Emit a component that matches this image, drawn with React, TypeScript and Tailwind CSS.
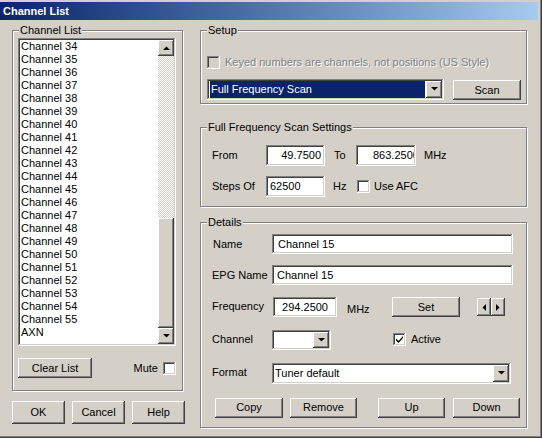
import React from "react";

// Win2000 classic bevels
const RAISED =
  "bg-[#d4d0c8] shadow-[inset_-1px_-1px_#404040,inset_1px_1px_#ffffff,inset_-2px_-2px_#808080,inset_2px_2px_#d4d0c8]";
const SUNKEN =
  "shadow-[inset_-1px_-1px_#ffffff,inset_1px_1px_#808080,inset_-2px_-2px_#d4d0c8,inset_2px_2px_#404040]";

function Arrow({ dir }: { dir: "up" | "down" | "left" | "right" }) {
  const pts: Record<string, string> = {
    up: "0,4 7,4 3.5,0.5",
    down: "0,0 7,0 3.5,3.5",
    left: "4,0 4,7 0.5,3.5",
    right: "0,0 0,7 3.5,3.5",
  };
  const vertical = dir === "up" || dir === "down";
  return (
    <svg width={vertical ? 7 : 4} height={vertical ? 4 : 7} viewBox={vertical ? "0 0 7 4" : "0 0 4 7"}>
      <polygon points={pts[dir]} fill="#000" />
    </svg>
  );
}

function Btn({ children, className = "" }: { children?: React.ReactNode; className?: string }) {
  return (
    <div className={`${RAISED} flex items-center justify-center text-[11px] text-black ${className}`}>
      {children}
    </div>
  );
}

function Check({ checked = false, disabled = false }: { checked?: boolean; disabled?: boolean }) {
  return (
    <div
      className={`${SUNKEN} w-[13px] h-[13px] shrink-0 flex items-center justify-center ${
        disabled ? "bg-[#d4d0c8]" : "bg-white"
      }`}
    >
      {checked && (
        <svg width="7" height="7" viewBox="0 0 7 7">
          <path d="M0 2.5 L0 4.5 L2.5 7 L7 2 L7 0 L2.5 5 Z" fill="#000" />
        </svg>
      )}
    </div>
  );
}

function GroupBox({
  label,
  className = "",
  children,
}: {
  label: string;
  className?: string;
  children?: React.ReactNode;
}) {
  return (
    <div
      className={`relative border border-[#808080] shadow-[inset_1px_1px_#ffffff,1px_1px_#ffffff] ${className}`}
    >
      <span className="absolute -top-[8px] left-[6px] px-[1px] bg-[#d4d0c8] text-[11px] leading-[14px]">
        {label}
      </span>
      {children}
    </div>
  );
}

// className = outer size, inner = text padding (clipped inside the bevel)
function TextBox({
  value,
  className = "",
  inner = "",
  right = false,
}: {
  value: string;
  className?: string;
  inner?: string;
  right?: boolean;
}) {
  return (
    <div className={`${SUNKEN} bg-white p-[2px] flex text-[11px] ${className}`}>
      <div
        className={`flex-1 min-w-0 flex items-center overflow-hidden whitespace-nowrap ${
          right ? "justify-end" : ""
        } ${inner}`}
      >
        <span className="shrink-0">{value}</span>
      </div>
    </div>
  );
}

function Combo({ children, className = "" }: { children?: React.ReactNode; className?: string }) {
  return (
    <div className={`${SUNKEN} bg-white flex items-stretch p-[2px] text-[11px] ${className}`}>
      <div className="flex-1 flex items-center overflow-hidden whitespace-nowrap min-w-0">{children}</div>
      <div className={`${RAISED} w-[16px] flex items-center justify-center`}>
        <Arrow dir="down" />
      </div>
    </div>
  );
}

export default function App() {
  const channels = Array.from({ length: 22 }, (_, i) => `Channel ${34 + i}`).concat("AXN");

  return (
    <div className="w-[542px] h-[438px] bg-[#d4d0c8] flex flex-col pt-[2px] pr-[4px] text-black font-['Liberation_Sans',Arial,sans-serif] shadow-[inset_-1px_-1px_#404040,inset_-2px_-2px_#808080] overflow-hidden select-none">
      {/* Title bar */}
      <div className="h-[18px] shrink-0 flex items-center pl-[3px] bg-linear-to-r from-[#0a246a] to-[#a6caf0] text-white font-bold text-[11px]">
        Channel List
      </div>

      <div className="flex">
        {/* Left column */}
        <div className="ml-[12px] mt-[10px] w-[173px] flex flex-col">
          <GroupBox label="Channel List" className="w-[171px] h-[361px] pl-[5px] pt-[7px]">
            {/* List box */}
            <div className={`${SUNKEN} bg-white w-[158px] h-[308px] p-[2px] flex`}>
              <div className="flex-1 pl-[1px] overflow-hidden">
                {channels.map((c) => (
                  <div key={c} className="text-[11px] leading-[13px] h-[13px] whitespace-nowrap">
                    {c}
                  </div>
                ))}
              </div>
              <div className="w-[16px] flex flex-col">
                <Btn className="h-[16px] shrink-0">
                  <Arrow dir="up" />
                </Btn>
                <div className="flex-1 bg-[repeating-conic-gradient(#d4d0c8_0_25%,#ffffff_0_50%)] bg-[length:2px_2px]" />
                <Btn className="h-[110px] shrink-0" />
                <Btn className="h-[16px] shrink-0">
                  <Arrow dir="down" />
                </Btn>
              </div>
            </div>

            <div className="w-[158px] mt-[12px] flex items-center">
              <Btn className="w-[74px] h-[20px]">Clear List</Btn>
              <span className="ml-auto mr-[5px] text-[11px]">Mute</span>
              <Check />
            </div>
          </GroupBox>

          <div className="mt-[10px] flex gap-[7px]">
            <Btn className="w-[53px] h-[23px]">OK</Btn>
            <Btn className="w-[53px] h-[23px]">Cancel</Btn>
            <Btn className="w-[53px] h-[23px]">Help</Btn>
          </div>
        </div>

        {/* Right column */}
        <div className="ml-[15px] mt-[10px] w-[327px] flex flex-col">
          <GroupBox label="Setup" className="h-[74px] pl-[6px]">
            <div className="mt-[25px] flex items-center h-[13px]">
              <Check disabled />
              <span className="ml-[5px] text-[11px] text-[#808080] [text-shadow:1px_1px_0_#ffffff]">
                Keyed numbers are channels, not positions (US Style)
              </span>
            </div>
            <div className="mt-[9px] flex items-center">
              <Combo className="w-[237px] h-[21px]">
                <div className="h-full w-full mx-[1px] my-[1px] bg-[#0a246a] text-white flex items-center pl-[1px]">
                  Full Frequency Scan
                </div>
              </Combo>
              <Btn className="ml-[9px] mt-[2px] w-[68px] h-[20px]">Scan</Btn>
            </div>
          </GroupBox>

          <GroupBox label="Full Frequency Scan Settings" className="mt-[23px] h-[80px] pl-[11px]">
            <div className="mt-[17px] flex items-center text-[11px]">
              <span className="w-[54px]">From</span>
              <TextBox value="49.7500" right className="w-[59px] h-[21px]" inner="pr-[2px]" />
              <span className="ml-[9px] w-[22px]">To</span>
              <TextBox value="863.2500" className="w-[60px] h-[21px]" inner="pl-[15px]" />
              <span className="ml-[8px]">MHz</span>
            </div>
            <div className="mt-[10px] flex items-center text-[11px]">
              <span className="w-[54px]">Steps Of</span>
              <TextBox value="62500" className="w-[59px] h-[21px]" inner="pl-[2px]" />
              <span className="ml-[8px] w-[24px]">Hz</span>
              <Check />
              <span className="ml-[4px]">Use AFC</span>
            </div>
          </GroupBox>

          <GroupBox label="Details" className="mt-[15px] h-[206px] pl-[11px]">
            <div className="mt-[11px] flex items-center text-[11px]">
              <span className="w-[60px] pl-[1px]">Name</span>
              <TextBox value="Channel 15" className="w-[241px] h-[20px]" inner="pl-[4px]" />
            </div>
            <div className="mt-[11px] flex items-center text-[11px]">
              <span className="w-[60px]">EPG Name</span>
              <TextBox value="Channel 15" className="w-[241px] h-[20px]" inner="pl-[3px]" />
            </div>
            <div className="mt-[12px] flex items-center text-[11px]">
              <span className="w-[61px] pb-[3px]">Frequency</span>
              <TextBox value="294.2500" right className="w-[64px] h-[20px]" inner="pr-[7px]" />
              <span className="ml-[10px] w-[45px] pt-[4px]">MHz</span>
              <Btn className="w-[68px] h-[20px]">Set</Btn>
              <Btn className="ml-[17px] w-[14px] h-[18px]">
                <Arrow dir="left" />
              </Btn>
              <Btn className="w-[14px] h-[18px]">
                <Arrow dir="right" />
              </Btn>
            </div>
            <div className="mt-[12px] flex items-center text-[11px]">
              <span className="w-[60px]">Channel</span>
              <Combo className="w-[59px] h-[20px]" />
              <span className="ml-[62px]">
                <Check checked />
              </span>
              <span className="ml-[5px]">Active</span>
            </div>
            <div className="mt-[13px] flex items-center text-[11px]">
              <span className="w-[60px] pb-[2px]">Format</span>
              <Combo className="w-[239px] h-[21px]">
                <span className="pl-[1px]">Tuner default</span>
              </Combo>
            </div>
            <div className="mt-[14px] ml-[3px] flex items-center">
              <Btn className="w-[68px] h-[20px]">Copy</Btn>
              <Btn className="ml-[7px] w-[67px] h-[20px]">Remove</Btn>
              <Btn className="ml-[21px] w-[67px] h-[20px]">Up</Btn>
              <Btn className="ml-[8px] w-[67px] h-[20px]">Down</Btn>
            </div>
          </GroupBox>
        </div>
      </div>
    </div>
  );
}
